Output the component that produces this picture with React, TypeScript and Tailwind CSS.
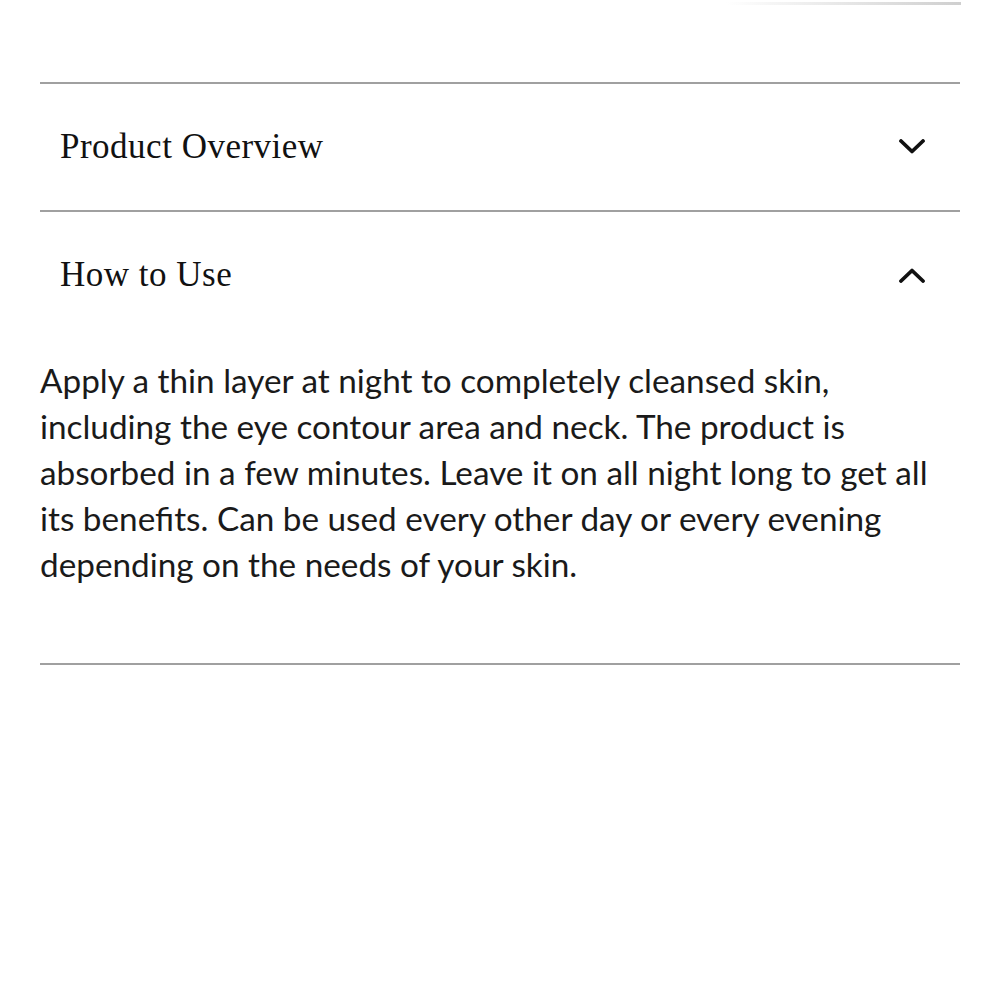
import React, { useState } from 'react';

const sections = [
  {
    title: 'Product Overview',
    body: '',
  },
  {
    title: 'How to Use',
    body:
      'Apply a thin layer at night to completely cleansed skin, including the eye contour area and neck. The product is absorbed in a few minutes. Leave it on all night long to get all its benefits. Can be used every other day or every evening depending on the needs of your skin.',
  },
];

const Chevron = ({ up }: { up: boolean }) => (
  <svg width="28" height="16" viewBox="0 0 28 16" fill="none">
    <polyline
      points={up ? '3,14 14,3.5 25,14' : '3,2 14,12.5 25,2'}
      stroke="#111"
      strokeWidth="3.8"
      strokeLinecap="round"
      strokeLinejoin="round"
    />
  </svg>
);

export default function App() {
  const [open, setOpen] = useState<number | null>(1);

  return (
    <div className="w-[1000px] h-[1000px] bg-white relative">
      {/* carousel progress line */}
      <div className="absolute top-[2px] right-[39px] w-[235px] h-[3px] bg-gradient-to-r from-white to-[#cfcfcf]" />

      <div className="px-[40px] pt-[82px]">
        {sections.map((s, i) => (
          <div key={s.title} className="border-t-2 border-[#a0a0a0]">
            <button
              onClick={() => setOpen(open === i ? null : i)}
              className="w-full h-[126px] flex items-center justify-between pl-[20px] pr-[34px]"
            >
              <span
                className="text-[35px] text-[#111] tracking-[0.5px]"
                style={{ fontFamily: '"Liberation Serif", "DejaVu Serif", serif' }}
              >
                {s.title}
              </span>
              <Chevron up={open === i} />
            </button>
            {open === i && s.body && (
              <p
                className="pt-[19px] pb-[76px] text-[33.3px] leading-[46px] text-[#1a1a1a]"
                style={{ fontFamily: 'Lato, "Noto Sans", sans-serif' }}
              >
                {s.body}
              </p>
            )}
          </div>
        ))}
        <div className="border-t-2 border-[#a0a0a0]" />
      </div>
    </div>
  );
}
